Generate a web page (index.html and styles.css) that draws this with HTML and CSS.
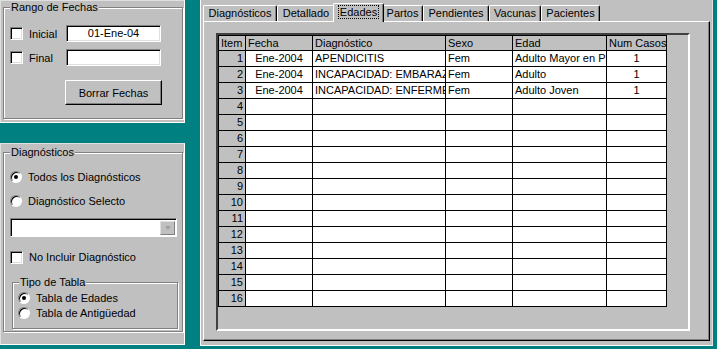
FILE: index.html
```html
<!DOCTYPE html>
<html lang="es">
<head>
  <meta charset="UTF-8">
  <title>Estadísticas</title>
  <link rel="stylesheet" href="styles.css">
</head>
<body>
  <div class="screen">
    <div class="side">
      <div class="panel dates">
        <fieldset class="group range">
          <legend>Rango de Fechas</legend>
          <div class="row first">
            <label class="check"><span class="box"></span>Inicial</label>
            <div class="field">01-Ene-04</div>
          </div>
          <div class="row second">
            <label class="check"><span class="box"></span>Final</label>
            <div class="field"></div>
          </div>
          <div class="row">
            <button class="btn">Borrar Fechas</button>
          </div>
        </fieldset>
      </div>

      <div class="panel diag">
        <fieldset class="group diagnostics">
          <legend>Diagnósticos</legend>
          <label class="row option all"><span class="radio on"></span>Todos los Diagnósticos</label>
          <label class="row option one"><span class="radio"></span>Diagnóstico Selecto</label>
          <div class="row">
            <div class="combo">
              <div class="combo-text"></div>
              <div class="combo-btn"><span class="arrow"></span></div>
            </div>
          </div>
          <label class="row option exclude"><span class="box"></span>No Incluir Diagnóstico</label>
          <fieldset class="group kind">
            <legend>Tipo de Tabla</legend>
            <label class="row option"><span class="radio on"></span>Tabla de Edades</label>
            <label class="row option"><span class="radio"></span>Tabla de Antigüedad</label>
          </fieldset>
        </fieldset>
      </div>
    </div>

    <div class="form">
      <div class="tabs">
        <div class="tab-strip">
          <div class="tab diagnosticos">Diagnósticos</div>
          <div class="tab detallado">Detallado</div>
          <div class="tab edades active"><span class="focus">Edades</span></div>
          <div class="tab partos">Partos</div>
          <div class="tab pendientes">Pendientes</div>
          <div class="tab vacunas">Vacunas</div>
          <div class="tab pacientes">Pacientes</div>
        </div>
        <div class="tab-page">
          <div class="subform">
            <div class="grid">
              <div class="cell head">Item</div>
              <div class="cell head">Fecha</div>
              <div class="cell head">Diagnóstico</div>
              <div class="cell head">Sexo</div>
              <div class="cell head">Edad</div>
              <div class="cell head center">Num Casos</div>

              <div class="cell idx">1</div>
              <div class="cell center">Ene-2004</div>
              <div class="cell">APENDICITIS</div>
              <div class="cell">Fem</div>
              <div class="cell">Adulto Mayor en Plenitud</div>
              <div class="cell center">1</div>

              <div class="cell idx">2</div>
              <div class="cell center">Ene-2004</div>
              <div class="cell">INCAPACIDAD: EMBARAZO</div>
              <div class="cell">Fem</div>
              <div class="cell">Adulto</div>
              <div class="cell center">1</div>

              <div class="cell idx">3</div>
              <div class="cell center">Ene-2004</div>
              <div class="cell">INCAPACIDAD: ENFERMEDAD</div>
              <div class="cell">Fem</div>
              <div class="cell">Adulto Joven</div>
              <div class="cell center">1</div>

              <div class="cell idx">4</div><div class="cell"></div><div class="cell"></div><div class="cell"></div><div class="cell"></div><div class="cell"></div>
              <div class="cell idx">5</div><div class="cell"></div><div class="cell"></div><div class="cell"></div><div class="cell"></div><div class="cell"></div>
              <div class="cell idx">6</div><div class="cell"></div><div class="cell"></div><div class="cell"></div><div class="cell"></div><div class="cell"></div>
              <div class="cell idx">7</div><div class="cell"></div><div class="cell"></div><div class="cell"></div><div class="cell"></div><div class="cell"></div>
              <div class="cell idx">8</div><div class="cell"></div><div class="cell"></div><div class="cell"></div><div class="cell"></div><div class="cell"></div>
              <div class="cell idx">9</div><div class="cell"></div><div class="cell"></div><div class="cell"></div><div class="cell"></div><div class="cell"></div>
              <div class="cell idx">10</div><div class="cell"></div><div class="cell"></div><div class="cell"></div><div class="cell"></div><div class="cell"></div>
              <div class="cell idx">11</div><div class="cell"></div><div class="cell"></div><div class="cell"></div><div class="cell"></div><div class="cell"></div>
              <div class="cell idx">12</div><div class="cell"></div><div class="cell"></div><div class="cell"></div><div class="cell"></div><div class="cell"></div>
              <div class="cell idx">13</div><div class="cell"></div><div class="cell"></div><div class="cell"></div><div class="cell"></div><div class="cell"></div>
              <div class="cell idx">14</div><div class="cell"></div><div class="cell"></div><div class="cell"></div><div class="cell"></div><div class="cell"></div>
              <div class="cell idx">15</div><div class="cell"></div><div class="cell"></div><div class="cell"></div><div class="cell"></div><div class="cell"></div>
              <div class="cell idx">16</div><div class="cell"></div><div class="cell"></div><div class="cell"></div><div class="cell"></div><div class="cell"></div>
            </div>
          </div>
        </div>
      </div>
    </div>
  </div>
</body>
</html>
```

FILE: styles.css
```css
* {
  padding: 0;
  margin: 0;
  box-sizing: border-box;
  font-family: "Liberation Sans", Arial, sans-serif;
  font-size: 11px;
  color: #000;
}

body {
  background-color: #008080;
  width: 717px;
  height: 349px;
  overflow: hidden;
}

.screen {
  display: flex;
  gap: 15px;
}

/* left column */
.side {
  width: 185px;
  display: flex;
  flex-direction: column;
  gap: 20px;
}

.panel {
  background-color: #c0c0c0;
  border: 1px solid #fff;
  border-top-color: #dfdfdf;
  border-left-color: #dfdfdf;

  &.dates {
    height: 123px;
  }

  &.diag {
    height: 202px;
    padding-top: 2px;
  }
}

.group {
  border: 1px solid #808080;
  box-shadow: inset 1px 1px 0 #fff, 1px 1px 0 #fff;

  & > legend {
    margin-left: 6px;
    padding: 0 1px;
    line-height: 13px;
    background-color: #c0c0c0;
  }

  &.range {
    margin-left: 2px;
    width: 180px;
    height: 118px;
  }

  &.diagnostics {
    margin-left: 2px;
    width: 180px;
    height: 186px;
  }

  &.kind {
    margin: 11px 0 0 8px;
    width: 166px;
    height: 53px;

    & > .option {
      padding-left: 5px;
      height: 15px;
      margin-top: 0;
    }

    & > .option:first-of-type {
      margin-top: 1px;
    }
  }
}

.row {
  display: flex;
  align-items: center;
  padding-left: 6px;

  &.first {
    margin-top: 11px;
  }

  &.second {
    margin-top: 7px;
    margin-bottom: 14px;
  }
}

.check {
  width: 56px;
  display: flex;
  align-items: center;
  gap: 6px;
}

.option {
  height: 16px;
  gap: 6px;

  &.all {
    margin-top: 10px;
  }

  &.one {
    margin-top: 8px;
    margin-bottom: 9px;
  }

  &.exclude {
    margin-top: 12px;
  }
}

.box {
  width: 13px;
  height: 13px;
  background-color: #fff;
  border: 1px solid;
  border-color: #808080 #fff #fff #808080;
  box-shadow: inset 1px 1px 0 #000, inset -1px -1px 0 #dfdfdf;
}

.radio {
  width: 12px;
  height: 12px;
  border-radius: 50%;
  background-color: #fff;
  border: 1px solid;
  border-color: #808080 #fff #fff #808080;
  box-shadow: inset 1px 1px 0 #000;
  display: flex;
  align-items: center;
  justify-content: center;

  &.on::after {
    content: "";
    width: 4px;
    height: 4px;
    border-radius: 50%;
    background-color: #000;
  }
}

.field {
  width: 95px;
  height: 17px;
  background-color: #fff;
  border: 1px solid;
  border-color: #808080 #fff #fff #808080;
  box-shadow: inset 1px 1px 0 #000, inset -1px -1px 0 #dfdfdf;
  text-align: center;
  line-height: 15px;
}

.btn {
  margin-left: 55px;
  width: 97px;
  height: 25px;
  background-color: #c0c0c0;
  border: 1px solid;
  border-color: #fff #000 #000 #fff;
  box-shadow: inset -1px -1px 0 #808080;
}

.combo {
  width: 167px;
  height: 19px;
  display: flex;
  background-color: #fff;
  border: 1px solid;
  border-color: #808080 #fff #fff #808080;
  box-shadow: inset 1px 1px 0 #000;
  padding: 2px 1px 1px 2px;

  & > .combo-text {
    flex: 1;
  }

  & > .combo-btn {
    width: 15px;
    background-color: #c0c0c0;
    border: 1px solid;
    border-color: #dfdfdf #808080 #808080 #dfdfdf;
    display: flex;
    align-items: center;
    justify-content: center;

    & > .arrow {
      border-left: 3px solid transparent;
      border-right: 3px solid transparent;
      border-top: 4px solid #a0a0a0;
    }
  }
}

/* right form */
.form {
  width: 513px;
  height: 346px;
  background-color: #c0c0c0;
  border-left: 1px solid #fff;
  border-bottom: 1px solid #fff;
  border-right: 1px solid #dfdfdf;
  padding: 3px 0 0 2px;
}

.tabs {
  width: 507px;

  & > .tab-strip {
    display: flex;
    align-items: flex-end;
    height: 18px;

    & > .tab {
      height: 16px;
      line-height: 15px;
      text-align: center;
      white-space: nowrap;
      border: 1px solid #fff;
      border-bottom: none;
      border-right-color: #000;
      border-radius: 2px 2px 0 0;
      box-shadow: inset -1px 0 0 #808080;
      background-color: #c0c0c0;
    }

    & > .diagnosticos { width: 74px; }
    & > .detallado { width: 58px; }
    & > .edades { width: 47px; }
    & > .partos { width: 41px; }
    & > .pendientes { width: 66px; }
    & > .vacunas { width: 52px; }
    & > .pacientes { width: 59px; }

    & > .tab.active {
      width: 51px;
      height: 19px;
      margin: 0 -2px -1px;
      position: relative;
      z-index: 1;
      line-height: 16px;

      & > .focus {
        outline: 1px dotted #000;
        padding: 0 1px;
      }
    }
  }

  & > .tab-page {
    height: 320px;
    border: 1px solid #fff;
    border-right-color: #000;
    border-bottom-color: #000;
    box-shadow: inset -1px -1px 0 #808080;
    padding: 11px 0 0 12px;
  }
}

.subform {
  width: 474px;
  height: 298px;
  border: 2px solid;
  border-color: #404040 #fff #fff #404040;
}

.grid {
  display: grid;
  grid-template-columns: 26px 66px 132px 66px 93px 59px;
  grid-template-rows: 14px repeat(16, 15px);
  gap: 1px;
  width: max-content;
  background-color: #000;
  border: 1px solid #000;

  & > .cell {
    background-color: #fff;
    padding: 0 2px;
    line-height: 15px;
    white-space: nowrap;
    overflow: hidden;
  }

  & > .head {
    background-color: #c0c0c0;
    line-height: 14px;
  }

  & > .idx {
    background-color: #c0c0c0;
    text-align: right;
  }

  & > .center {
    text-align: center;
  }
}
```
